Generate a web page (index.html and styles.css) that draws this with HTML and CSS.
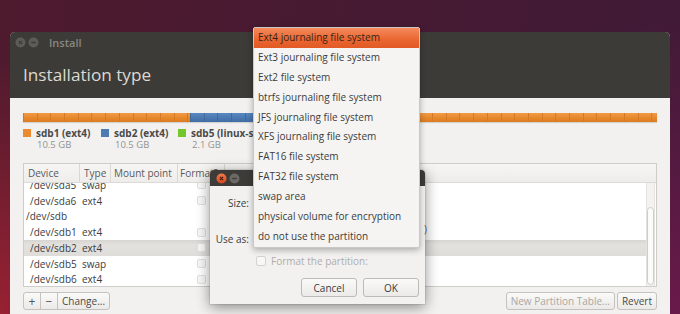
FILE: index.html
```html
<!DOCTYPE html>
<html>
<head>
<meta charset="utf-8">
<link rel="stylesheet" href="styles.css">
</head>
<body>
<div class="desktop">
  <div class="window">
    <div class="titlebar">
      <svg class="wbtn" width="11" height="11" viewBox="0 0 11 11"><circle cx="5.5" cy="5.5" r="5" fill="#5d5c58"/><path d="M3.8 3.8l3.4 3.4M7.2 3.8l-3.4 3.4" stroke="#3c3b37" stroke-width="1.2"/></svg>
      <svg class="wbtn" width="11" height="11" viewBox="0 0 11 11"><circle cx="5.5" cy="5.5" r="5" fill="#5d5c58"/><path d="M3.3 5.5h4.4" stroke="#3c3b37" stroke-width="1.3"/></svg>
      <span class="wtitle">Install</span>
    </div>
    <div class="header"><h1 class="heading">Installation type</h1></div>
    <div class="content">
      <div class="pbar">
        <div class="seg orange" style="width:167px"></div>
        <div class="seg blue" style="width:167px"></div>
        <div class="seg green" style="width:34px"></div>
        <div class="seg orange fill"></div>
      </div>
      <div class="legend">
        <div class="litem">
          <span class="sq orange"></span>
          <div class="ltext"><div class="lname">sdb1 (ext4)</div><div class="lsize">10.5 GB</div></div>
        </div>
        <div class="litem">
          <span class="sq blue"></span>
          <div class="ltext"><div class="lname">sdb2 (ext4)</div><div class="lsize">10.5 GB</div></div>
        </div>
        <div class="litem">
          <span class="sq green"></span>
          <div class="ltext"><div class="lname">sdb5 (linux-swap)</div><div class="lsize">2.1 GB</div></div>
        </div>
      </div>
      <div class="table">
        <div class="thead">
          <div class="th c1">Device</div>
          <div class="th c2">Type</div>
          <div class="th c3">Mount point</div>
          <div class="th c4">Format?</div>
          <div class="th c5"></div>
        </div>
        <div class="tbody">
          <div class="rows">
            <div class="row"><span class="c1 dev">/dev/sda5</span><span class="c2">swap</span><span class="c3"></span><span class="c4"><i class="cb"></i></span></div>
            <div class="row"><span class="c1 dev">/dev/sda6</span><span class="c2">ext4</span><span class="c3"></span><span class="c4"><i class="cb"></i></span></div>
            <div class="row"><span class="c1 disk">/dev/sdb</span></div>
            <div class="row"><span class="c1 dev">/dev/sdb1</span><span class="c2">ext4</span><span class="c3"></span><span class="c4"><i class="cb"></i></span></div>
            <div class="row sel"><span class="c1 dev">/dev/sdb2</span><span class="c2">ext4</span><span class="c3"></span><span class="c4"><i class="cb"></i></span></div>
            <div class="row"><span class="c1 dev">/dev/sdb5</span><span class="c2">swap</span><span class="c3"></span><span class="c4"><i class="cb"></i></span></div>
            <div class="row"><span class="c1 dev">/dev/sdb6</span><span class="c2">ext4</span><span class="c3"></span><span class="c4"><i class="cb"></i></span></div>
          </div>
          <div class="scroll"><div class="thumb"></div></div>
        </div>
      </div>
      <div class="actions">
        <div class="group">
          <span class="btn sm">+</span><span class="btn sm">−</span><span class="btn">Change...</span>
        </div>
        <div class="group right">
          <span class="btn dis">New Partition Table...</span><span class="btn">Revert</span>
        </div>
      </div>
    </div>
  </div>

  <div class="dialog">
    <div class="dtitle">
      <svg class="wbtn" width="11" height="11" viewBox="0 0 11 11"><defs><linearGradient id="cg" x1="0" y1="0" x2="0" y2="1"><stop offset="0" stop-color="#f47a4a"/><stop offset="1" stop-color="#d9461a"/></linearGradient></defs><circle cx="5.5" cy="5.5" r="5" fill="url(#cg)"/><path d="M3.9 3.9l3.2 3.2M7.1 3.9l-3.2 3.2" stroke="#4a1d0c" stroke-width="1.2"/></svg>
      <svg class="wbtn" width="11" height="11" viewBox="0 0 11 11"><circle cx="5.5" cy="5.5" r="5" fill="#6a6965"/><path d="M3.3 5.5h4.4" stroke="#3c3b37" stroke-width="1.3"/></svg>
      <span class="dname">Edit partition</span>
    </div>
    <div class="dbody">
      <div class="frow size"><span class="flabel">Size:</span></div>
      <div class="frow use"><span class="flabel">Use as:</span><span class="paren">)</span></div>
      <div class="frow fmt"><i class="cb big"></i><span class="fmtlabel">Format the partition:</span></div>
      <div class="dbtns"><span class="btn dbtn">Cancel</span><span class="btn dbtn">OK</span></div>
    </div>
  </div>

  <div class="menu">
    <div class="mi hl">Ext4 journaling file system</div>
    <div class="mi">Ext3 journaling file system</div>
    <div class="mi">Ext2 file system</div>
    <div class="mi">btrfs journaling file system</div>
    <div class="mi">JFS journaling file system</div>
    <div class="mi">XFS journaling file system</div>
    <div class="mi">FAT16 file system</div>
    <div class="mi">FAT32 file system</div>
    <div class="mi">swap area</div>
    <div class="mi">physical volume for encryption</div>
    <div class="mi">do not use the partition</div>
  </div>
</div>
</body>
</html>
```

FILE: styles.css
```css
* { box-sizing: border-box; }
html, body { margin: 0; padding: 0; }
body {
  width: 680px;
  height: 314px;
  overflow: hidden;
  font-family: "Open Sans", "Noto Sans", sans-serif;
  font-size: 10px;
  color: #3c3c3c;
}
.desktop {
  position: relative;
  width: 680px;
  height: 314px;
  padding: 32px 10px 0 10px;
  background:
    radial-gradient(ellipse 160px 260px at 0% 100%, rgba(160,34,50,0.9) 0%, rgba(160,34,50,0) 100%),
    radial-gradient(ellipse 200px 300px at 100% 100%, rgba(110,26,76,0.9) 0%, rgba(110,26,76,0) 100%),
    linear-gradient(100deg, #4e1a2e 0%, #461a33 55%, #3f1a37 100%);
}
.window {
  width: 660px;
  height: 282px;
  background: #f2f1f0;
  border-radius: 5px 5px 0 0;
  overflow: hidden;
}
.titlebar {
  height: 20px;
  background: #3c3b37;
  display: flex;
  align-items: center;
  padding-left: 5px;
  gap: 2px;
}
.wbtn { display: block; flex: none; }
.wtitle {
  margin-left: 8px;
  color: #8a8782;
  font-size: 11px;
  font-weight: 600;
}
.header {
  height: 46px;
  background: #3c3b37;
  padding: 11px 0 0 13px;
}
.heading {
  margin: 0;
  font-size: 17.2px;
  font-weight: 400;
  color: #dcd9d2;
  line-height: 24px;
}
.content { padding: 15px 13px 0 13px; }
.pbar {
  display: flex;
  height: 9px;
  box-shadow: 0 1px 1px rgba(0,0,0,0.12);
}
.seg { height: 9px; flex: none; }
.seg.fill { flex: 1; }
.seg.orange, .sq.orange { background: #e98b2e; }
.seg.blue, .sq.blue { background: #4c7ab3; }
.seg.green, .sq.green { background: #73c72b; }
.seg.orange {
  background:
    repeating-linear-gradient(to right, #d47a25 0, #d47a25 1px, transparent 1px, transparent 13.7px),
    linear-gradient(#f19a45, #e5862a 60%, #dc7c22);
}
.seg.blue {
  background:
    repeating-linear-gradient(to right, #41699c 0, #41699c 1px, transparent 1px, transparent 13.7px),
    linear-gradient(#5a88c0, #4a77b0 60%, #436ea5);
}
.legend {
  display: flex;
  margin-top: 6px;
  height: 27px;
}
.litem { display: flex; align-items: flex-start; }
.litem:nth-child(1) { width: 78px; }
.litem:nth-child(2) { width: 77px; }
.sq { width: 8px; height: 8px; margin-top: 1px; flex: none; }
.ltext { margin-left: 5px; }
.lname { font-weight: 700; font-size: 10px; line-height: 11px; color: #4a4a4a; }
.lsize { font-size: 9.5px; color: #929292; line-height: 11px; margin-left: 1px; }
.table {
  margin-top: 8px;
  height: 124px;
  border: 1px solid #cfcdc9;
  background: #fff;
  display: flex;
  flex-direction: column;
}
.thead {
  height: 19px;
  flex: none;
  display: flex;
  background: linear-gradient(#f6f5f4, #eeedec);
  border-bottom: 1px solid #dcdad6;
}
.th {
  line-height: 18px;
  font-size: 10px;
  color: #5a5a5a;
  border-right: 1px solid #dad8d4;
}
.c1 { width: 56px; flex: none; }
.c2 { width: 31px; flex: none; }
.c3 { width: 67px; flex: none; }
.c4 { width: 47px; flex: none; }
.th.c1 { padding-left: 4px; }
.th.c2 { padding-left: 4px; }
.th.c3 { padding-left: 3px; }
.th.c4 { padding-left: 2px; white-space: nowrap; overflow: hidden; }
.th.c5 { flex: 1; border-right: 0; }
.tbody {
  flex: 1;
  display: flex;
  overflow: hidden;
}
.rows { flex: 1; margin-top: -6px; }
.row {
  height: 15.75px;
  display: flex;
  align-items: center;
  font-size: 10px;
  color: #3c3c3c;
}
.row .dev { padding-left: 6px; }
.row .disk { padding-left: 2px; }
.row .c2 { padding-left: 2px; }
.row .c4 { padding-left: 19px; display: flex; }
.row.sel {
  background: linear-gradient(#d6d5d2, #e2e1de 30%, #dedddA);
}
.cb {
  display: block;
  width: 9px;
  height: 9px;
  border: 1px solid #e2e0dd;
  border-radius: 2px;
  background: #f7f7f6;
}
.scroll {
  width: 9px;
  flex: none;
  margin: 0 1px 0 0;
  padding-top: 24px;
  background: #f3f2f1;
  border-left: 1px solid #e4e3e1;
  border-right: 1px solid #e4e3e1;
}
.thumb {
  height: 78px;
  border: 1px solid #cfcdca;
  border-radius: 4px;
  background: #fbfbfa;
}
.actions {
  display: flex;
  justify-content: space-between;
  margin-top: 5px;
}
.group { display: flex; }
.group.right { gap: 2px; }
.btn {
  display: inline-flex;
  align-items: center;
  justify-content: center;
  height: 18px;
  padding: 0 4px;
  border: 1px solid #c4c2be;
  background: linear-gradient(#fafaf9, #ebeae8);
  font-size: 10px;
  color: #4a4a4a;
  border-radius: 3px;
}
.group:first-child .btn { border-radius: 0; margin-left: -1px; }
.group:first-child .btn:first-child { border-radius: 3px 0 0 3px; margin-left: 0; }
.group:first-child .btn:last-child { border-radius: 0 3px 3px 0; }
.btn.sm { width: 18px; padding: 0; font-size: 12px; color: #555; }
.btn.dis { color: #a9a7a3; }

.dialog {
  position: absolute;
  left: 210px;
  top: 170px;
  width: 215px;
  height: 134px;
  border-radius: 4px 4px 0 0;
  background: #f2f1f0;
  box-shadow: 0 3px 14px rgba(0,0,0,0.45), 0 0 0 1px rgba(0,0,0,0.08);
}
.dtitle {
  height: 16px;
  background: #3c3b37;
  border-radius: 4px 4px 0 0;
  display: flex;
  align-items: center;
  padding-left: 6px;
  gap: 2px;
}
.dname {
  margin-left: 14px;
  color: #dfdbd2;
  font-size: 11px;
  font-weight: 600;
}
.dbody { position: relative; height: 118px; }
.frow { display: flex; align-items: center; height: 16px; position: relative; }
.frow.size { margin-top: 9px; }
.frow.use { margin-top: 20px; }
.flabel {
  width: 39px;
  text-align: right;
  font-size: 10px;
  color: #3c3c3c;
}
.paren { position: absolute; left: 214px; top: -9px; font-size: 10px; color: #555; }
.frow.fmt { margin-top: 6px; padding-left: 46px; }
.cb.big { width: 10px; height: 10px; border-color: #d5d3cf; }
.fmtlabel { margin-left: 5px; font-size: 10px; color: #b0ada8; }
.dbtns {
  display: flex;
  justify-content: flex-end;
  gap: 6px;
  padding-right: 6px;
  margin-top: 9px;
}
.btn.dbtn {
  width: 56px;
  height: 19px;
  border-color: #bdbbb7;
  border-radius: 3px;
  color: #3c3c3c;
}

.menu {
  position: absolute;
  left: 253px;
  top: 27px;
  width: 167px;
  height: 221px;
  background: #f5f4f2;
  border: 1px solid #cac8c4;
  border-radius: 2px;
  box-shadow: 0 2px 6px rgba(0,0,0,0.3);
}
.mi {
  height: 19.9px;
  line-height: 19.9px;
  padding-left: 4px;
  font-size: 10px;
  color: #3c3c3c;
  white-space: nowrap;
}
.mi.hl {
  background: linear-gradient(#f58a5c, #e9652f 60%, #e25a26);
  color: #3a2418;
}
```
